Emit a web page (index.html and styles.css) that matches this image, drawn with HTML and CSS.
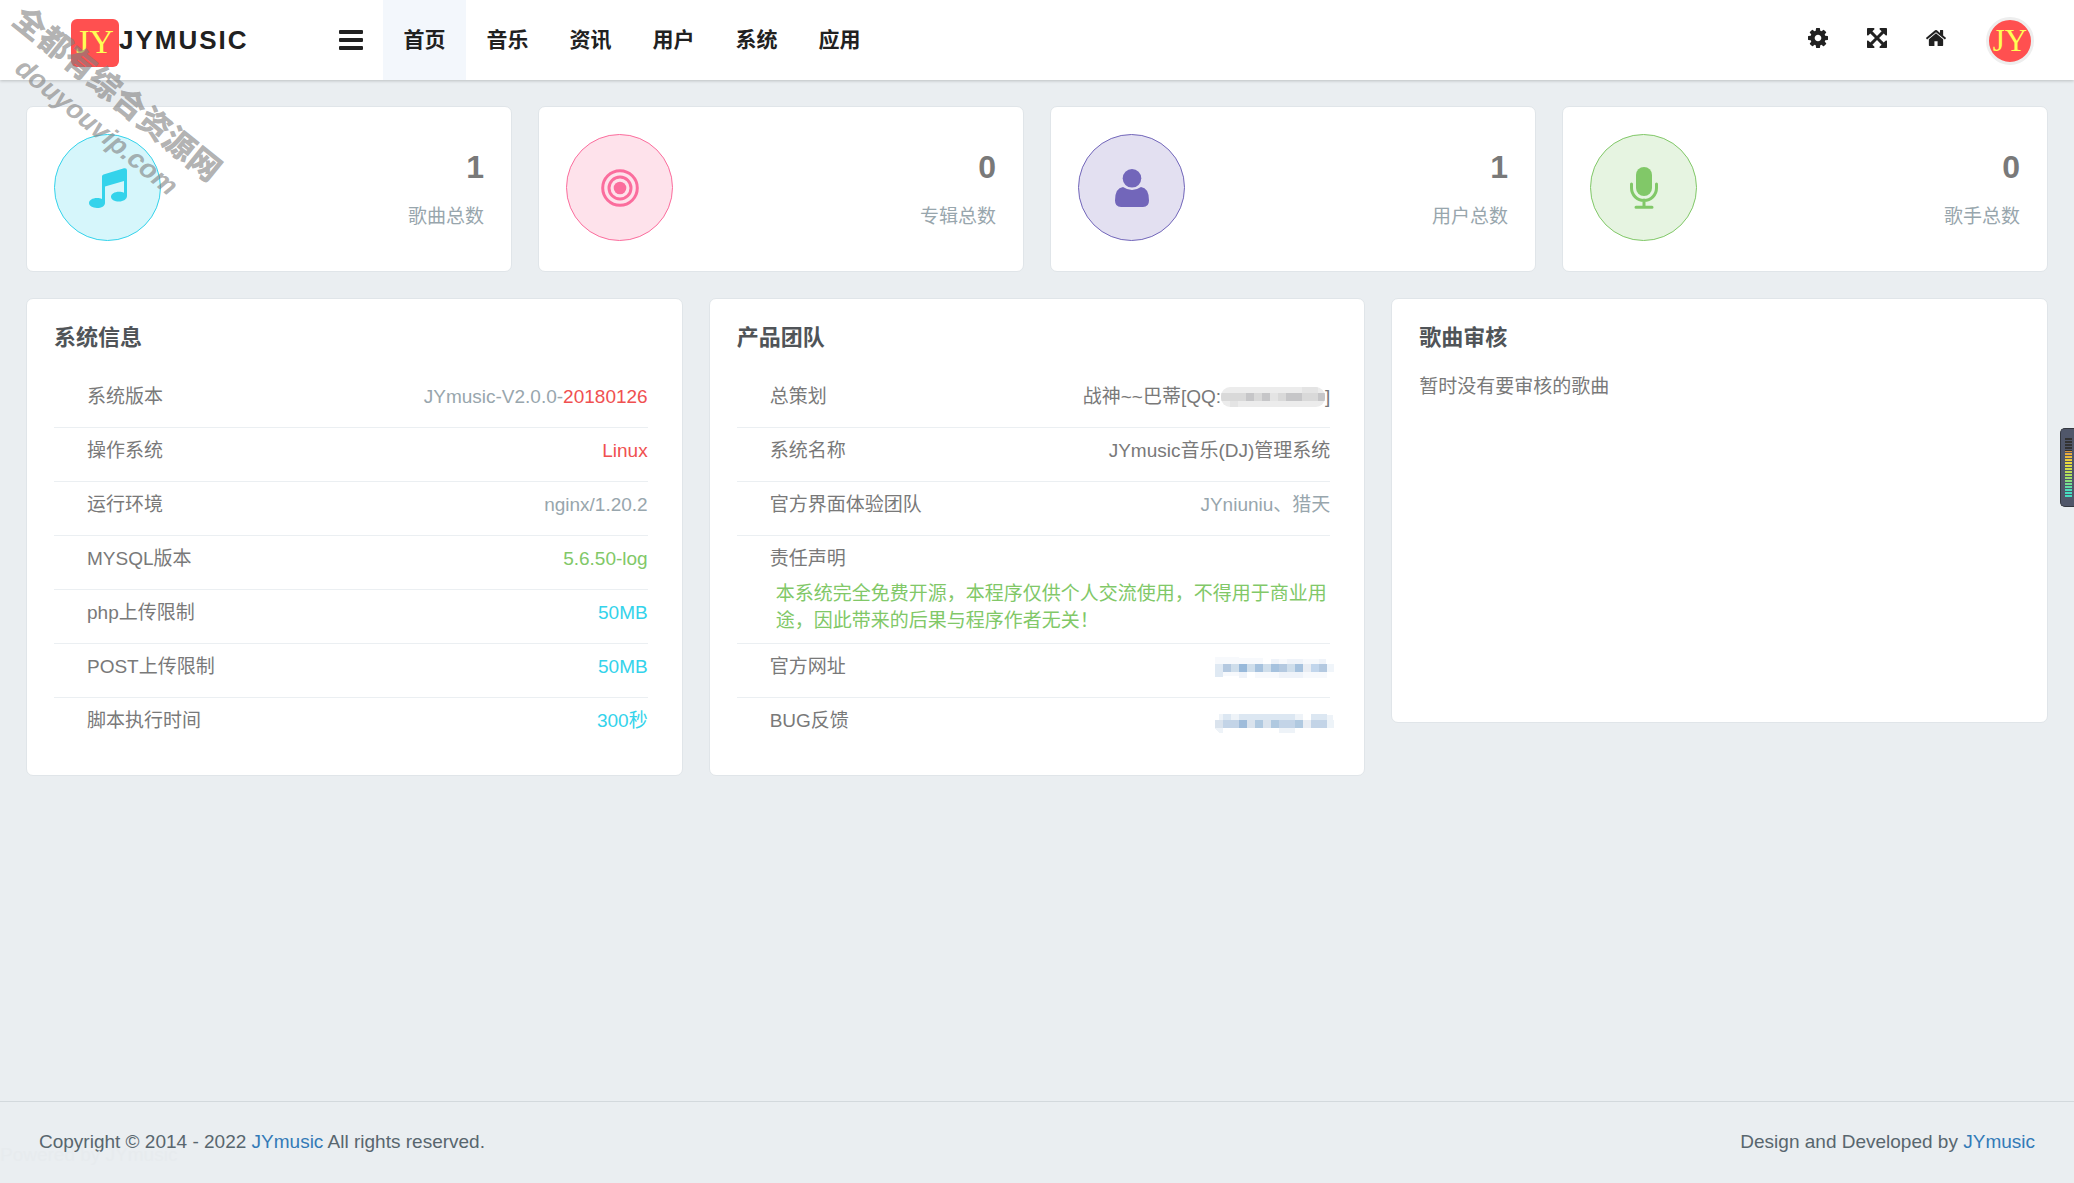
FILE: index.html
```html
<!DOCTYPE html>
<html lang="zh-CN">
<head>
<meta charset="utf-8">
<title>JYmusic</title>
<link rel="stylesheet" href="styles.css">
</head>
<body>
<header class="topbar">
  <a class="brand" href="#"><span class="brand-logo">JY</span><span class="brand-name">JYMUSIC</span></a>
  <button class="menu-toggle" type="button" aria-label="菜单">
    <svg width="24" height="20" viewBox="0 0 24 20"><path d="M1 0h22a1 1 0 0 1 1 1v2a1 1 0 0 1-1 1H1a1 1 0 0 1-1-1V1a1 1 0 0 1 1-1zM1 8h22a1 1 0 0 1 1 1v2a1 1 0 0 1-1 1H1a1 1 0 0 1-1-1V9a1 1 0 0 1 1-1zM1 16h22a1 1 0 0 1 1 1v2a1 1 0 0 1-1 1H1a1 1 0 0 1-1-1v-2a1 1 0 0 1 1-1z"/></svg>
  </button>
  <nav class="main-nav">
    <a class="active" href="#">首页</a><a href="#">音乐</a><a href="#">资讯</a><a href="#">用户</a><a href="#">系统</a><a href="#">应用</a>
  </nav>
  <div class="tools">
    <button class="tool" type="button" aria-label="设置">
      <svg width="20" height="20" viewBox="0 0 1536 1536"><path d="M1024 768q0-106-75-181t-181-75-181 75-75 181 75 181 181 75 181-75 75-181zm512-109v222q0 12-8 23t-20 13l-185 28q-19 54-39 91 35 50 107 138 10 12 10 25t-9 23q-27 37-99 108t-94 71q-12 0-26-9l-138-108q-44 23-91 38-16 136-29 186-7 28-36 28H657q-14 0-24.500-8.500T621 1506l-28-184q-49-16-90-37l-141 107q-10 9-25 9-14 0-25-11-126-114-165-168-7-10-7-23 0-12 8-23 15-21 51-66.500t54-70.500q-27-50-41-99L29 913q-13-2-21-12.500T0 877V655q0-12 8-23t19-13l186-28q14-46 39-92-40-57-107-138-10-12-10-24 0-10 9-23 26-36 98.500-107.500T337 135q13 0 26 10l138 107q44-23 91-38 16-136 29-186 7-28 36-28h222q14 0 24.500 8.500T915 30l28 184q49 16 90 37l142-107q9-9 24-9 13 0 25 10 129 119 165 170 7 8 7 22 0 12-8 23-15 21-51 66.500t-54 70.500q26 50 41 98l183 28q13 2 21 12.500t8 23.500z"/></svg>
    </button>
    <button class="tool" type="button" aria-label="全屏">
      <svg width="20" height="20" viewBox="0 0 1536 1536"><path d="M1283 413L928 768l355 355 144-144q29-31 70-14 39 17 39 59v448q0 26-19 45t-45 19h-448q-42 0-59-40-17-39 14-69l144-144-355-355-355 355 144 144q31 30 14 69-17 40-59 40H64q-26 0-45-19t-19-45v-448q0-42 40-59 39-17 69 14l144 144 355-355-355-355-144 144q-19 19-45 19-12 0-24-5-40-17-40-59V64q0-26 19-45T64 0h448q42 0 59 40 17 39-14 69L413 253l355 355 355-355-144-144q-31-30-14-69 17-40 59-40h448q26 0 45 19t19 45v448q0 42-39 59-13 5-25 5-26 0-45-19z"/></svg>
    </button>
    <a class="tool" href="#" aria-label="主页">
      <svg width="20" height="16" viewBox="0 0 1612 1283"><path d="M1382 739v480q0 26-19 45t-45 19H934V899H678v384H294q-26 0-45-19t-19-45V739q0-1 .5-3t.5-3l575-474 575 474q1 2 1 6zm223-69l-62 74q-8 9-21 11h-3q-13 0-21-7L806 171 114 748q-12 8-24 7-13-2-21-11L7 670q-8-10-7-23.500T11 625L730 26q32-26 76-26t76 26l244 204V35q0-14 9-23t23-9h192q14 0 23 9t9 23v408l219 182q10 8 11 21.500t-7 23.500z"/></svg>
    </a>
    <a class="avatar" href="#">JY</a>
  </div>
</header>

<main class="content">
  <section class="stats">
    <article class="card stat">
      <span class="stat-icon cyan"><svg width="38" height="40" viewBox="0 0 38 40"><path d="M13 8.500Q13 7 14.500 6.500L35 .3Q38-.3 38 2.500V28c0 3-3.500 5.500-8 5.500s-8-2-8-4.800 3.500-5 8-5c2 0 3.500.3 5 1V13L16 18.500V35c0 3-3.500 5-8 5s-8-2-8-4.900S3.500 30 8 30c2 0 3.600.4 5 1z"/></svg></span>
      <div class="stat-text"><strong>1</strong><span>歌曲总数</span></div>
    </article>
    <article class="card stat">
      <span class="stat-icon pink"><svg width="38" height="38" viewBox="0 0 38 38"><circle cx="19" cy="19" r="6.300"/><g fill="none" stroke="currentColor" stroke-width="3"><circle cx="19" cy="19" r="11"/><circle cx="19" cy="19" r="17.300"/></g></svg></span>
      <div class="stat-text"><strong>0</strong><span>专辑总数</span></div>
    </article>
    <article class="card stat">
      <span class="stat-icon purple"><svg width="34" height="38" viewBox="0 0 34 38"><circle cx="17" cy="9.300" r="9.300"/><path d="M8 18q9 6 18 0 8 1 8 13.500 0 6.500-6 6.500H6q-6 0-6-6.500Q0 19 8 18z"/></svg></span>
      <div class="stat-text"><strong>1</strong><span>用户总数</span></div>
    </article>
    <article class="card stat">
      <span class="stat-icon green"><svg width="28" height="42" viewBox="0 0 28 42"><rect x="6" width="16" height="29" rx="8"/><path d="M1.500 17v4a12.500 12.500 0 0 0 25 0v-4M14 33v7M6 40.300h16" fill="none" stroke="currentColor" stroke-width="3" stroke-linecap="round"/></svg></span>
      <div class="stat-text"><strong>0</strong><span>歌手总数</span></div>
    </article>
  </section>

  <section class="panels">
    <article class="card panel">
      <h2>系统信息</h2>
      <ul class="rows">
        <li><span>系统版本</span><span class="muted">JYmusic-V2.0.0-<span class="red">20180126</span></span></li>
        <li><span>操作系统</span><span class="red">Linux</span></li>
        <li><span>运行环境</span><span class="muted">nginx/1.20.2</span></li>
        <li><span>MYSQL版本</span><span class="green-text">5.6.50-log</span></li>
        <li><span>php上传限制</span><span class="cyan-text">50MB</span></li>
        <li><span>POST上传限制</span><span class="cyan-text">50MB</span></li>
        <li><span>脚本执行时间</span><span class="cyan-text">300秒</span></li>
      </ul>
    </article>
    <article class="card panel">
      <h2>产品团队</h2>
      <ul class="rows">
        <li><span>总策划</span><span class="planner">战神~~巴蒂[QQ:<svg class="mosaic" width="104" height="20" viewBox="0 0 104 20"><defs><clipPath id="pill"><rect width="104" height="20" rx="9"/></clipPath></defs><g clip-path="url(#pill)"><path fill="#ececec" d="M0 0h104v20H0z"/><path fill="#d9d9d9" d="M0 6h104v8H0z"/><path fill="#c6c6c8" d="M25 6h8v8h-8zM41 6h8v8h-8zM65 6h16v8H65zM97 6h8v8h-8z"/><path fill="#e4e4e4" d="M9 14h8v6H9zM49 6h8v8h-8zM81 0h16v6H81z"/></g></svg>]</span></li>
        <li><span>系统名称</span><span>JYmusic音乐(DJ)管理系统</span></li>
        <li><span>官方界面体验团队</span><span class="muted">JYniuniu、猎天</span></li>
        <li class="notice"><span>责任声明</span><p>本系统完全免费开源，本程序仅供个人交流使用，不得用于商业用途，因此带来的后果与程序作者无关！</p></li>
        <li><span>官方网址</span><a class="hidden-link" href="#" aria-label="官方网址"><svg width="119" height="22" viewBox="0 0 119 22" shape-rendering="crispEdges"><path fill="#f7f9fc" d="M0 0h24v7H0zM24 1h24v6H24zM56 2h55v5H56zM8 15h16v4H8zM40 15h72v6H40z"/><path fill="#eff3f9" d="M56 2h8v5h-8zM72 2h16v5H72zM104 2h7v5h-7zM24 15h8v6h-8zM64 15h24v6H64z"/><path fill="#dfe9f3" d="M0 7h8v13H0z"/><path fill="#cfdeeb" d="M16 7h8v8h-8zM32 7h8v8h-8zM48 7h8v8h-8zM72 7h8v8h-8z"/><path fill="#b4c9e0" d="M8 7h8v8H8zM64 7h8v8h-8zM104 7h8v8h-8z"/><path fill="#98b9da" d="M24 7h8v8h-8z"/><path fill="#a6c2de" d="M40 7h8v8h-8zM56 7h8v8h-8zM80 7h8v8h-8z"/><path fill="#e9edf3" d="M88 7h8v8h-8z"/><path fill="#c2d6ec" d="M96 7h8v8h-8z"/><path fill="#f0f5fa" d="M112 7h7v8h-7z"/></svg></a></li>
        <li><span>BUG反馈</span><a class="hidden-link" href="#" aria-label="BUG反馈"><svg width="119" height="22" viewBox="0 0 119 22" shape-rendering="crispEdges"><path fill="#eef3f8" d="M4 3h20v6H4zM80 3h8v6h-8zM112 4h6v5h-6zM0 17h8v5H4zM64 17h16v5H64z"/><path fill="#dce7f2" d="M8 3h8v6H8zM24 3h56v6H24zM96 3h16v6H96z"/><path fill="#dae3ed" d="M0 9h8v8H0zM32 9h8v8h-8zM48 9h8v8h-8z"/><path fill="#c3d4e7" d="M8 9h16v8H8zM64 9h16v8H64zM96 9h16v8H96z"/><path fill="#9fbcda" d="M24 9h8v8h-8z"/><path fill="#b0c9e0" d="M40 9h8v8h-8zM56 9h8v8h-8zM80 9h8v8h-8z"/><path fill="#e9edf3" d="M88 9h8v8h-8z"/><path fill="#edf3f8" d="M112 9h7v8h-7z"/></svg></a></li>
      </ul>
    </article>
    <article class="card panel review">
      <h2>歌曲审核</h2>
      <p>暂时没有要审核的歌曲</p>
    </article>
  </section>
</main>

<footer class="footer">
  <p>Copyright © 2014 - 2022 <a href="#">JYmusic</a> All rights reserved.</p>
  <p>Design and Developed by <a href="#">JYmusic</a></p>
  <span class="powered">Powered by JYmusic</span>
</footer>

<div class="watermark"><span>全都有综合资源网</span><span class="domain">douyouvip.com</span></div>
<div class="meter"><span></span></div>
</body>
</html>
```
FILE: styles.css
```css
* { box-sizing: border-box; }

body {
  margin: 0;
  min-height: 100vh;
  display: flex;
  flex-direction: column;
  background: #eaeef1;
  color: #797979;
  font: 19px/26px "Liberation Sans", "Noto Sans CJK SC", sans-serif;
}

h2, p, ul { margin: 0; padding: 0; }
ul { list-style: none; }
a { color: #337ab7; text-decoration: none; }
button { border: 0; padding: 0; background: none; font: inherit; cursor: pointer; }
svg { display: block; fill: currentColor; }

/* Top bar */
.topbar {
  height: 80px;
  display: flex;
  align-items: center;
  padding: 0 40px 0 71px;
  background: #fff;
  box-shadow: 0 1px 3px rgba(0, 0, 0, .2);
}
.brand {
  width: 268px;
  display: flex;
  align-items: center;
  color: #212121;
}
.brand-logo, .avatar {
  background: #ff5050;
  color: #ffff55;
  font-family: "Liberation Serif", serif;
  text-align: center;
}
.brand-logo {
  width: 48px;
  height: 48px;
  margin-top: 5px;
  border-radius: 6px;
  font-size: 34px;
  line-height: 46px;
}
.brand-name { font-size: 26px; font-weight: 700; letter-spacing: 2px; }
.menu-toggle { color: #212121; margin-right: 20px; }
.main-nav { display: flex; }
.main-nav a {
  width: 83px;
  height: 80px;
  color: #212121;
  font-size: 21px;
  font-weight: 700;
  line-height: 80px;
  text-align: center;
}
.main-nav .active { background: #f3f7fc; }
.tools { margin-left: auto; display: flex; align-items: center; }
.tool {
  width: 59px;
  height: 76px;
  margin-bottom: 4px;
  display: flex;
  align-items: center;
  justify-content: center;
  color: #212121;
}
.avatar {
  width: 48px;
  height: 48px;
  margin: 2px 0 0 21px;
  border: 3px solid #eee;
  border-radius: 50%;
  font-size: 31px;
  line-height: 41px;
}

/* Cards */
.content {
  flex: 1;
  padding: 26px;
  display: flex;
  flex-direction: column;
  gap: 26px;
}
.card {
  background: #fff;
  border: 1px solid #e0e5e9;
  border-radius: 7px;
}
.stats { display: grid; grid-template-columns: repeat(4, 1fr); gap: 26px; }
.stat {
  display: flex;
  justify-content: space-between;
  padding: 27px 27px 30px;
}
.stat-icon {
  width: 107px;
  height: 107px;
  display: flex;
  align-items: center;
  justify-content: center;
  border: 1px solid currentColor;
  border-radius: 50%;
}
.cyan { color: #34d3eb; background: #d6f6fb; }
.pink { color: #fb6d9d; background: #fee2eb; }
.purple { color: #7266ba; background: #e3e0f1; }
.green { color: #81c868; background: #e6f4e1; }
.stat-text {
  display: flex;
  flex-direction: column;
  align-items: flex-end;
  gap: 19px;
  padding-top: 15px;
  color: #98a6ad;
}
.stat-text strong { color: #797979; font-size: 32px; line-height: 36px; }

/* Panels */
.panels {
  display: grid;
  grid-template-columns: repeat(3, 1fr);
  align-items: start;
  gap: 26px;
}
.panel { padding: 27px 34px 23px 27px; }
.panel h2 {
  margin-bottom: 24px;
  color: #505458;
  font-size: 22px;
  line-height: 24px;
}
.rows li {
  display: flex;
  justify-content: space-between;
  padding: 10px 0 17px 33px;
  border-bottom: 1px solid #ebeff2;
}
.rows li:last-child { border-bottom-color: transparent; }
.rows .notice { display: block; padding-bottom: 9px; }
.notice p {
  margin-top: 8px;
  padding-left: 6px;
  color: #81c868;
  line-height: 27px;
}
.planner { display: flex; align-items: center; }
.hidden-link { height: 26px; padding-top: 3px; margin-right: -4px; }
.muted { color: #98a6ad; }
.red { color: #f05050; }
.green-text { color: #81c868; }
.cyan-text { color: #34d3eb; }
.review { min-height: 425px; }

/* Footer */
.footer {
  position: relative;
  display: flex;
  justify-content: space-between;
  padding: 27px 39px 28px;
  border-top: 1px solid #d3d9dd;
  color: #58666e;
}
.powered { position: absolute; left: 0; bottom: 15px; color: #e7ebee; }

/* Overlays */
.watermark {
  position: absolute;
  left: -23px;
  top: 71px;
  display: flex;
  flex-direction: column;
  color: rgba(128, 128, 128, .62);
  font-size: 32px;
  font-weight: 900;
  line-height: 38px;
  transform: rotate(39deg);
}
.domain { padding-left: 33px; font-size: 27px; font-style: italic; }
.meter {
  position: fixed;
  right: 0;
  top: 428px;
  width: 14px;
  height: 79px;
  padding: 9px 2px 9px 4px;
  background: #50576a;
  border: 1px solid #343840;
  border-right: 0;
  border-radius: 5px 0 0 5px;
}
.meter span {
  display: block;
  height: 100%;
  background:
    repeating-linear-gradient(transparent 0 2px, #50576a 2px 3px),
    linear-gradient(#333 0 22%, #e9a03c 23%, #ecd93b 42%, #a9df60 65%, #45ddc0 90%);
}
```
